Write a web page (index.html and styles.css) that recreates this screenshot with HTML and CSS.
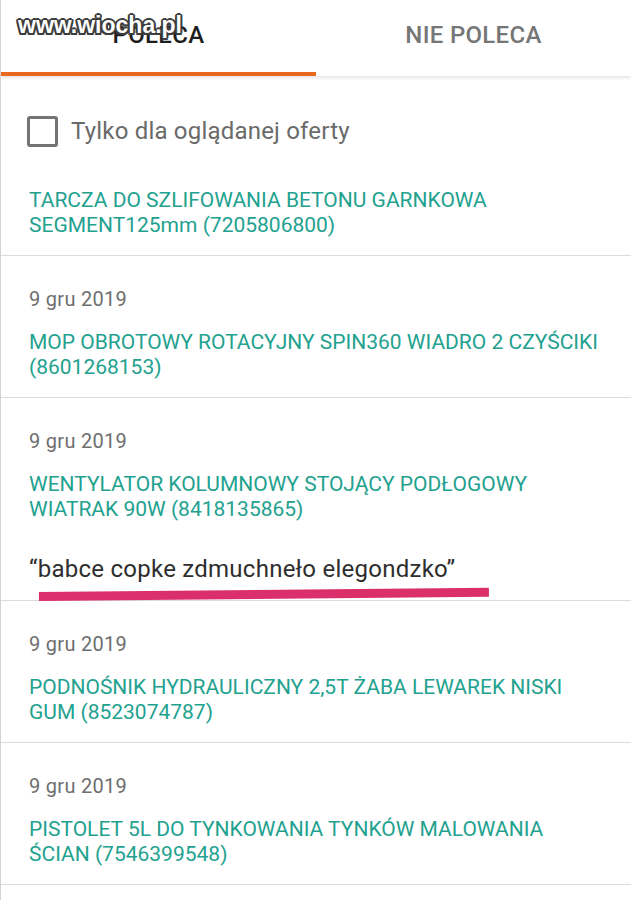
FILE: index.html
```html
<!DOCTYPE html>
<html lang="pl">
<head>
<meta charset="utf-8">
<title>Polecane</title>
<link rel="stylesheet" href="styles.css">
</head>
<body>
<div class="screen">
  <div class="tabs">
    <div class="tab tab-active">POLECA</div>
    <div class="tab">NIE POLECA</div>
  </div>
  <div class="watermark">www.wiocha.pl</div>
  <div class="filter">
    <span class="checkbox"></span>
    <span class="filter-label">Tylko dla oglądanej oferty</span>
  </div>
  <ul class="list">
    <li class="item item-first">
      <div class="title">TARCZA DO SZLIFOWANIA BETONU GARNKOWA<br>SEGMENT125mm (7205806800)</div>
    </li>
    <li class="item">
      <div class="date">9 gru 2019</div>
      <div class="title">MOP OBROTOWY ROTACYJNY SPIN360 WIADRO 2 CZYŚCIKI<br>(8601268153)</div>
    </li>
    <li class="item">
      <div class="date">9 gru 2019</div>
      <div class="title">WENTYLATOR KOLUMNOWY STOJĄCY PODŁOGOWY<br>WIATRAK 90W (8418135865)</div>
      <div class="quote">“babce copke zdmuchneło elegondzko”</div>
      <div class="marker"></div>
    </li>
    <li class="item">
      <div class="date">9 gru 2019</div>
      <div class="title">PODNOŚNIK HYDRAULICZNY 2,5T ŻABA LEWAREK NISKI<br>GUM (8523074787)</div>
    </li>
    <li class="item">
      <div class="date">9 gru 2019</div>
      <div class="title">PISTOLET 5L DO TYNKOWANIA TYNKÓW MALOWANIA<br>ŚCIAN (7546399548)</div>
    </li>
  </ul>
</div>
</body>
</html>
```

FILE: styles.css
```css
* { box-sizing: border-box; }

html, body {
  margin: 0;
  padding: 0;
  background: #ffffff;
}

body {
  font-family: Roboto, "Noto Sans", "Liberation Sans", sans-serif;
}

.screen {
  position: relative;
  min-height: 900px;
  border-left: 1px solid #d2d2d2;
  background: #ffffff;
  overflow: hidden;
}

.tabs {
  display: grid;
  grid-template-columns: 315px 1fr;
  height: 76px;
  box-shadow: 0 2px 3px rgba(0, 0, 0, 0.10);
  position: relative;
}

.tab {
  display: flex;
  justify-content: center;
  padding-top: 22px;
  font-size: 24px;
  line-height: 26px;
  font-weight: 500;
  letter-spacing: 0.3px;
  color: #767676;
}

.tab-active {
  color: #1e1e1e;
  border-bottom: 4px solid #e8691f;
}

.watermark {
  position: absolute;
  left: 17px;
  top: 12px;
  font-family: "Liberation Sans", Arial, sans-serif;
  font-weight: 700;
  font-size: 23px;
  line-height: 26px;
  color: #ffffff;
  text-shadow:
    -2px 0 0 #3c3c3c, 2px 0 0 #3c3c3c, 0 -2px 0 #3c3c3c, 0 2px 0 #3c3c3c,
    -1.5px -1.5px 0 #3c3c3c, 1.5px -1.5px 0 #3c3c3c, -1.5px 1.5px 0 #3c3c3c, 1.5px 1.5px 0 #3c3c3c;
}

.filter {
  display: flex;
  align-items: center;
  gap: 13px;
  padding: 40px 28px 10px 26px;
}

.checkbox {
  width: 31px;
  height: 31px;
  border: 3px solid #747474;
  border-radius: 3px;
  flex: none;
}

.filter-label {
  font-size: 24px;
  line-height: 31px;
  letter-spacing: 0.2px;
  color: #6a6a6a;
}

.list {
  list-style: none;
  margin: 0;
  padding: 0;
}

.item {
  padding: 31px 20px 17px 28px;
  border-bottom: 1px solid #dcdcdc;
  position: relative;
}

.date {
  font-size: 20px;
  line-height: 25px;
  letter-spacing: 0.3px;
  color: #6e6e6e;
  margin-bottom: 18px;
}

.title {
  font-size: 21px;
  line-height: 25px;
  letter-spacing: 0;
  white-space: nowrap;
  color: #22a18f;
}

.quote {
  margin-top: 33px;
  font-size: 24px;
  line-height: 28px;
  letter-spacing: 0.25px;
  color: #2e2e2e;
}

.marker {
  position: absolute;
  left: 38px;
  bottom: -1px;
  width: 450px;
  height: 9px;
  background: #db2f6c;
  transform: rotate(-0.55deg);
  transform-origin: left bottom;
}
```
